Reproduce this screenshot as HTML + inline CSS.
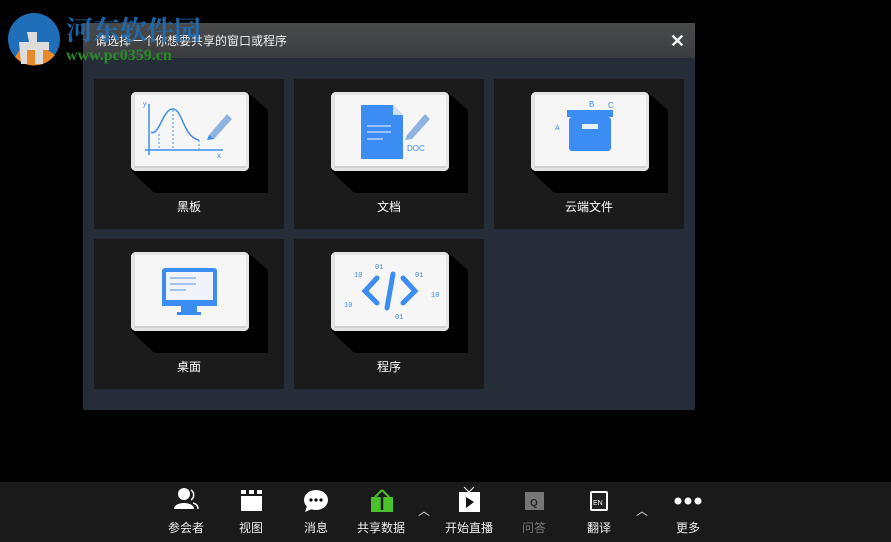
<!DOCTYPE html>
<html><head><meta charset="utf-8"><style>
*{margin:0;padding:0;box-sizing:border-box}
body{width:891px;height:542px;background:#000;position:relative;overflow:hidden;font-family:"Liberation Sans","Noto Sans CJK SC",sans-serif;color:#fff}
.dlg{position:absolute;left:83px;top:23px;width:612px;height:387px;background:#242d38;border-radius:2px}
.hd{height:35px;background:linear-gradient(#4a4a4a,#3a3d41);font-size:12px;line-height:37px;padding-left:12px;color:#f0f0f0;position:relative}
.x{position:absolute;right:10px;top:0;font-size:18px;font-weight:bold}
.card{position:absolute;width:190px;height:150px;background:#1b1b1b}
.sh{position:absolute;left:37px;top:13px;width:137px;height:101px;background:#000;clip-path:polygon(0 0,85% 0,100% 18%,100% 100%,17% 100%,0 78%)}
.box{position:absolute;left:37px;top:13px;width:118px;height:79px;background:#f6f6f6;border-radius:5px;box-shadow:inset 0 0 0 3px #e4e4e4,inset 0 -5px 0 #cfcfcf,inset 4px 0 0 #dcdcdc}
.box svg{position:absolute;left:0;top:0}
.lb{position:absolute;left:0;right:0;top:119px;text-align:center;font-size:12px}
.bar{position:absolute;left:0;top:482px;width:891px;height:60px;background:#1a1a1a}
.it{position:absolute;top:0;width:70px;text-align:center;font-size:12px;color:#eee}
.it .ic{height:34px;position:relative}
.it .t{position:absolute;top:37px;left:0;right:0}
.logo{position:absolute;left:5px;top:10px}
</style></head><body>
<div class="dlg">
<div class="hd">请选择一个你想要共享的窗口或程序<span class="x">✕</span></div>
</div>
<div class="card" style="left:94px;top:79px"><div class="sh"></div><div class="box"><svg width="118" height="79"><g stroke="#3f8ef0" fill="none" stroke-width="1.5"><path d="M18 12V63M14 58H92"/><path d="M20 40C28 45 32 16 42 17S52 45 68 48"/><path d="M28 42V58M42 18V58M68 48V58" stroke-dasharray="2 2" stroke-width="1"/></g><text x="12" y="14" fill="#3f8ef0" font-size="7">y</text><text x="86" y="66" fill="#3f8ef0" font-size="8">x</text><path d="M78 43L96 22L101 27L83 47L76 48Z" fill="#8fb3e0"/><path d="M76 48L78 43L83 47Z" fill="#3f8ef0"/></svg></div><div class="lb">黑板</div></div>
<div class="card" style="left:294px;top:79px"><div class="sh"></div><div class="box"><svg width="118" height="79"><path d="M30 13H62L72 23V67H30Z" fill="#3c8df3"/><path d="M62 13L72 23H62Z" fill="#cfe0f7"/><g stroke="#cfe4ff" stroke-width="1.2"><path d="M36 34H60M36 40H60M36 47H52"/></g><path d="M76 43L94 22L99 27L81 47L74 48Z" fill="#8fb3e0"/><text x="76" y="59" fill="#3f8ef0" font-size="8">DOC</text></svg></div><div class="lb">文档</div></div>
<div class="card" style="left:494px;top:79px"><div class="sh"></div><div class="box"><svg width="118" height="79"><rect x="36" y="18" width="46" height="7" fill="#3c8df3"/><rect x="38" y="25" width="42" height="34" rx="3" fill="#3c8df3"/><rect x="51" y="32" width="16" height="5" fill="#e8f0fb"/><text x="58" y="15" fill="#3f8ef0" font-size="8">B</text><text x="77" y="16" fill="#3f8ef0" font-size="8">C</text><text x="24" y="38" fill="#3f8ef0" font-size="7">A</text></svg></div><div class="lb">云端文件</div></div>
<div class="card" style="left:94px;top:239px"><div class="sh"></div><div class="box"><svg width="118" height="79"><rect x="31" y="16" width="55" height="38" rx="3" fill="#3c8df3"/><rect x="35" y="20" width="47" height="28" fill="#f0f4fa"/><rect x="31" y="48" width="55" height="6" fill="#3c8df3"/><path d="M50 54H66V60H70V63H46V60H50Z" fill="#3c8df3"/><g stroke="#6fa8f0" stroke-width="1.2"><path d="M39 26H65M39 32H65M39 38H55"/></g></svg></div><div class="lb">桌面</div></div>
<div class="card" style="left:294px;top:239px"><div class="sh"></div><div class="box"><svg width="118" height="79"><g stroke="#3c8df3" stroke-width="5" stroke-linecap="round" fill="none"><path d="M46 26L34 39L46 51M72 26L84 39L72 51M62 22L56 56"/></g><g fill="#3f8ef0" font-size="7" font-family="Liberation Mono"><text x="44" y="17">01</text><text x="23" y="25">10</text><text x="84" y="25">01</text><text x="100" y="45">10</text><text x="13" y="55">10</text><text x="64" y="67">01</text></g></svg></div><div class="lb">程序</div></div>

<div class="bar">
<div class="it" style="left:151px"><div class="ic"><svg width="70" height="34"><circle cx="33" cy="12" r="6" fill="#fff"/><path d="M23 27C23 19 43 19 43 27Z" fill="#fff"/><path d="M40 8A6 6 0 0 1 40 18M42 21C46 22 47 24 47 27" stroke="#fff" fill="none" stroke-width="1.5"/></svg></div><div class="t">参会者</div></div>
<div class="it" style="left:216px"><div class="ic"><svg width="70" height="34"><rect x="25" y="8" width="5" height="4" fill="#fff"/><rect x="33" y="8" width="5" height="4" fill="#fff"/><rect x="41" y="8" width="5" height="4" fill="#fff"/><rect x="25" y="14" width="21" height="15" fill="#fff"/></svg></div><div class="t">视图</div></div>
<div class="it" style="left:281px"><div class="ic"><svg width="70" height="34"><ellipse cx="35" cy="18" rx="12" ry="10" fill="#fff"/><path d="M26 24L24 30L31 27Z" fill="#fff"/><circle cx="30" cy="18" r="1.6"/><circle cx="35" cy="18" r="1.6"/><circle cx="40" cy="18" r="1.6"/></svg></div><div class="t">消息</div></div>
<div class="it" style="left:346px"><div class="ic"><svg width="70" height="34"><rect x="25" y="15" width="22" height="15" fill="#4ac22a"/><path d="M36 28V9" stroke="#1a1a1a" stroke-width="2.5"/><path d="M36 8L29 15M36 8L43 15" stroke="#4ac22a" stroke-width="2" fill="none"/></svg></div><div class="t">共享数据</div></div>
<div style="position:absolute;left:418px;top:20px;font-size:12px;color:#ddd">︿</div>
<div class="it" style="left:434px"><div class="ic"><svg width="70" height="34"><path d="M30 5L35 10L40 5" stroke="#fff" fill="none"/><rect x="25" y="10" width="21" height="20" fill="#fff"/><path d="M32 15V26L40 20Z" fill="#111"/></svg></div><div class="t">开始直播</div></div>
<div class="it" style="left:499px;color:#777"><div class="ic"><svg width="70" height="34"><rect x="26" y="10" width="19" height="18" fill="#777"/><text x="31" y="24" fill="#222" font-size="10" font-weight="bold">Q</text></svg></div><div class="t">问答</div></div>
<div class="it" style="left:564px"><div class="ic"><svg width="70" height="34"><rect x="26" y="9" width="18" height="20" rx="2" fill="#fff"/><rect x="28" y="11" width="14" height="16" fill="#222"/><text x="29" y="23" fill="#fff" font-size="7">EN</text></svg></div><div class="t">翻译</div></div>
<div style="position:absolute;left:636px;top:20px;font-size:12px;color:#ddd">︿</div>
<div class="it" style="left:653px"><div class="ic"><svg width="70" height="34"><circle cx="25" cy="19" r="3.5" fill="#fff"/><circle cx="35" cy="19" r="3.5" fill="#fff"/><circle cx="45" cy="19" r="3.5" fill="#fff"/></svg></div><div class="t">更多</div></div>
</div>

<div class="logo"><svg width="60" height="60"><circle cx="29" cy="29" r="26" fill="#1e6fb8"/><path d="M10 47A26 26 0 0 0 50 45L40 38H16Z" fill="#e8892a"/><path d="M14 32H44V40H38V54H30V40H22V54H16Z" fill="#ddd"/><path d="M22 22H32V32H24Z" fill="#ddd"/></svg></div>
<div style="position:absolute;left:66px;top:9px;font-size:27px;font-weight:bold;color:#1e6fb8;font-family:'Noto Serif CJK SC',serif;opacity:.9">河东软件园</div>
<div style="position:absolute;left:66px;top:47px;font-size:16px;font-weight:bold;color:#2a8a2a;font-family:'Liberation Serif',serif">www.pc0359.cn</div>
</body></html>
